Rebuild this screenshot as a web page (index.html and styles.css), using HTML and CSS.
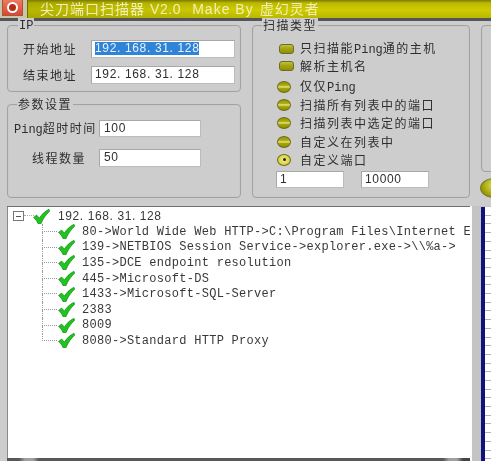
FILE: index.html
```html
<!DOCTYPE html>
<html lang="zh">
<head>
<meta charset="utf-8">
<title>尖刀端口扫描器</title>
<link rel="stylesheet" href="styles.css">
</head>
<body>
<svg class="defs" width="0" height="0">
  <symbol id="ok" viewBox="0 0 17 15">
    <path d="M0.5 8.5 L3.5 6 L6.5 9 C8.5 5.5 11.5 2.5 16 0.3 L16.7 2.2 C12.8 5.8 10 9.8 8 14.7 L5 14.7 C4 12 2.5 10 0.5 8.5 Z" fill="#1fc41f" stroke="#0d7d0d" stroke-width="0.6"/>
  </symbol>
</svg>
<div class="app">
  <header class="titlebar">
    <div class="appicon"><span class="ring"></span></div>
    <div class="caption"><span class="cap-cn">尖刀端口扫描器</span><span class="cap-ver">V2.0</span><span class="cap-make">Make By</span><span class="cap-cn">虚幻灵者</span></div>
  </header>

  <div class="top">
    <div class="leftcol">
      <section class="group group-ip">
        <h2 class="legend legend-ip"><span class="lat">IP</span></h2>
        <div class="form form-ip">
          <label class="cn lab-ip">开始地址</label>
          <div class="field field-ip"><span class="sel">192. 168. 31. 128</span></div>
          <label class="cn lab-ip">结束地址</label>
          <div class="field field-ip">192. 168. 31. 128</div>
        </div>
      </section>
      <section class="group group-par">
        <h2 class="legend cn">参数设置</h2>
        <div class="form form-par">
          <label class="cn"><span class="lat">Ping</span>超时时间</label>
          <div class="field field-ping">100</div>
          <label class="cn lab-thread">线程数量</label>
          <div class="field field-thread">50</div>
        </div>
      </section>
    </div>

    <section class="group group-scan">
      <h2 class="legend cn">扫描类型</h2>
      <div class="opts">
        <div class="opt opt-check"><i class="cap"></i><span class="cn">只扫描能<span class="lat">Ping</span>通的主机</span></div>
        <div class="opt opt-check"><i class="cap"></i><span class="cn">解析主机名</span></div>
        <div class="opt opt-radio opt-first"><i class="rad"></i><span class="cn">仅仅<span class="lat">Ping</span></span></div>
        <div class="opt opt-radio"><i class="rad"></i><span class="cn">扫描所有列表中的端口</span></div>
        <div class="opt opt-radio"><i class="rad"></i><span class="cn">扫描列表中选定的端口</span></div>
        <div class="opt opt-radio"><i class="rad"></i><span class="cn">自定义在列表中</span></div>
        <div class="opt opt-radio"><i class="rad rad-on"></i><span class="cn">自定义端口</span></div>
      </div>
      <div class="range">
        <div class="field field-range">1</div>
        <div class="field field-range">10000</div>
      </div>
    </section>

    <div class="rightcol">
      <section class="group group-right"></section>
      <div class="ball"></div>
    </div>
  </div>

  <div class="bottom">
    <div class="treebox">
      <div class="treelist">
        <div class="root">
          <span class="minus"></span>
          <svg class="ok"><use href="#ok"/></svg>
          <span class="ip">192. 168. 31. 128</span>
        </div>
        <ul class="tree">
          <li><svg class="ok"><use href="#ok"/></svg><span>80-&gt;World Wide Web HTTP-&gt;C:\Program Files\Internet E</span></li>
          <li><svg class="ok"><use href="#ok"/></svg><span>139-&gt;NETBIOS Session Service-&gt;explorer.exe-&gt;\\%a-&gt;</span></li>
          <li><svg class="ok"><use href="#ok"/></svg><span>135-&gt;DCE endpoint resolution</span></li>
          <li><svg class="ok"><use href="#ok"/></svg><span>445-&gt;Microsoft-DS</span></li>
          <li><svg class="ok"><use href="#ok"/></svg><span>1433-&gt;Microsoft-SQL-Server</span></li>
          <li><svg class="ok"><use href="#ok"/></svg><span>2383</span></li>
          <li><svg class="ok"><use href="#ok"/></svg><span>8009</span></li>
          <li><svg class="ok"><use href="#ok"/></svg><span>8080-&gt;Standard HTTP Proxy</span></li>
        </ul>
      </div>
      <div class="treefoot"></div>
    </div>
    <div class="ruler"></div>
  </div>
</div>
</body>
</html>
```

FILE: styles.css
```css
html, body { margin: 0; padding: 0; background: #cdcdcd; overflow: hidden; }
.defs { display: block; width: 0; height: 0; }

.app {
  width: 491px; height: 461px; overflow: hidden;
  background: #cdcdcd; color: #2e2e2e;
  display: flex; flex-direction: column;
  font-family: "Liberation Mono", "Noto Sans CJK SC", monospace;
  font-size: 12px;
  filter: blur(0.6px);
}

/* title */
.titlebar {
  height: 21px; flex: none; box-sizing: border-box;
  display: flex;
  border-bottom: 3px solid #55555c;
  background: #c9c7a8;
}
.appicon {
  width: 21px; margin-left: 2px; height: 16px; box-sizing: border-box;
  background: linear-gradient(#ee7a60, #d9482f);
  border: 1px solid #a8553f; border-top: 0;
  display: flex; align-items: center; justify-content: center;
}
.ring { width: 7px; height: 7px; border: 2px solid #fff; border-radius: 50%; background: #b52c1a; }
.caption {
  flex: 1; margin-left: 4px; height: 18px; padding-left: 12px; box-sizing: border-box;
  display: flex; align-items: center;
  background: linear-gradient(90deg, rgba(120,120,0,.25) 0, rgba(120,120,0,0) 45%), linear-gradient(#7e7a00 0, #b9b900 3px, #cfcb00 10px, #b8b800 100%);
  border-left: 1px solid #6c6c00;
  color: #f3efb4;
  font-family: "Liberation Sans", "Noto Sans CJK SC", sans-serif;
  font-size: 14px; line-height: 16px; letter-spacing: 1px;
}
.cap-ver { margin-left: 5px; letter-spacing: .6px; }
.cap-make { margin-left: 11px; margin-right: 6px; letter-spacing: 1px; }

/* layout */
.top { display: flex; gap: 11px; padding: 4px 0 0 7px; height: 173px; flex: none; }
.leftcol { width: 234px; flex: none; display: flex; flex-direction: column; gap: 12px; }
.rightcol { flex: none; width: 40px; display: flex; flex-direction: column; }

.group {
  box-sizing: border-box; border: 1px solid #a2a2a2; border-radius: 4px;
  box-shadow: inset 0 0 1px #bbb;
}
.group-ip { height: 67px; }
.group-par { height: 94px; }
.group-scan { width: 218px; height: 173px; flex: none; }
.group-right { height: 147px; width: 60px; }

.legend {
  display: block; width: fit-content; height: 14px; line-height: 14px;
  margin: -8px 0 0 9px; padding: 0 1px;
  background: #cdcdcd; font-weight: 400; font-size: 12px; color: #2e2e2e;
}
.legend-ip { margin-left: 10px; padding-top: 1px; height: 13px; }
.cn { font-family: "Noto Sans CJK SC", sans-serif; font-size: 12px; letter-spacing: 1.5px; line-height: 14px; color: #2e2e2e; }
.lat { font-family: "Liberation Mono", monospace; letter-spacing: 0; }

/* forms */
.form { display: grid; align-items: center; }
.form-ip { grid-template-columns: 68px 144px; padding: 8px 0 0 15px; row-gap: 8px; }
.form-par { grid-template-columns: 85px 102px; padding: 9px 0 0 6px; row-gap: 12px; }
.lab-thread { padding-left: 18px; }

.field {
  box-sizing: border-box; height: 18px; background: #fff;
  border: 1px solid #a8a8a8; border-bottom-color: #bcbcbc; border-right-color: #bcbcbc;
  padding: 0 0 0 3px; line-height: 15px;
  font-family: "Liberation Sans", sans-serif; font-size: 12px; letter-spacing: .65px; color: #2e2e2e;
  white-space: nowrap;
}
.sel { background: #2f84d8; color: #e8f1fb; display: inline-block; height: 13px; line-height: 13px; }
.field-ping, .field-thread { padding-left: 4px; }
.field-ping { height: 17px; }
.field-range { width: 68px; height: 17px; }

/* scan options */
.opts { padding: 8px 0 0 0; }
.opt { display: flex; align-items: center; }
.opt-check { height: 17px; padding-left: 26px; gap: 6px; }
.opt-radio { height: 18.3px; padding-left: 24px; gap: 9px; }
.opt-first { margin-top: 5px; height: 16.8px; }
.cap {
  width: 15px; height: 10px; box-sizing: border-box; border-radius: 3px;
  border: 1px solid #6c6c28;
  background: linear-gradient(#c2c23a 0, #a6a612 45%, #8f8f05 100%);
}
.rad {
  width: 14px; height: 12px; box-sizing: border-box; border-radius: 50%;
  border: 1px solid #6d6d1c;
  background: linear-gradient(#8e8e0a 0, #b0b010 35%, #e9e98a 50%, #a8a80c 62%, #8c8c04 100%);
  display: flex; align-items: center; justify-content: center;
}
.rad-on { background: radial-gradient(circle, #f3ef8a 0, #d7d03c 70%, #9a9408 100%); }
.rad-on::after { content: ""; width: 3px; height: 3px; border-radius: 50%; background: #222; }
.range { display: flex; gap: 17px; padding: 2px 0 0 23px; }

.ball {
  width: 28px; height: 20px; margin-top: 6px; margin-left: -1px; border-radius: 50%;
  background: radial-gradient(ellipse at 50% 35%, #e3e36a 0, #a9a90c 55%, #6f6f12 100%);
  border: 1px solid #77772a; box-sizing: border-box;
}

/* bottom */
.bottom { display: flex; margin-top: 8px; flex: 1; min-height: 0; padding-left: 7px; }
.treebox {
  width: 463px; flex: none; box-sizing: border-box; background: #fff;
  border-top: 1px solid #6f6f6f;
  display: flex; flex-direction: column;
  font-family: "Liberation Mono", monospace; font-size: 12px; letter-spacing: .28px; color: #383838;
  white-space: nowrap;
}
.treelist { flex: 1; min-height: 0; overflow: hidden; padding: 1px 0 0 5px; border-left: 1px solid #8a8a8a; }
.treefoot {
  height: 3px; flex: none;
  background: linear-gradient(90deg, #585858 0, #585858 12px, #a0a0a0 18px, #a0a0a0 26px, #585858 32px, #585858 436px, #a0a0a0 442px, #a0a0a0 450px, #444 456px);
}
.root { display: flex; align-items: center; height: 16px; }
.minus {
  width: 11px; height: 10px; box-sizing: border-box; border: 1px solid #777; position: relative; flex: none;
  background: linear-gradient(#555, #555) center / 5px 1px no-repeat #fff;
}
.minus::after { content: ""; position: absolute; left: 10px; top: 3px; width: 10px; border-top: 1px dotted #aaa; }
.ok { width: 17px; height: 15px; flex: none; display: block; }
.root .ok { margin-left: 9px; }
.ip { margin-left: 8px; font-family: "Liberation Sans", sans-serif; letter-spacing: .6px; }

.tree { list-style: none; margin: 0; padding: 0 0 0 45px; }
.tree li { display: flex; align-items: center; height: 15.6px; position: relative; }
.tree li::before {
  content: ""; position: absolute; left: -16px; top: 0; width: 15px; height: 8px;
  border-left: 1px dotted #999; border-bottom: 1px dotted #999; box-sizing: border-box;
}
.tree li::after {
  content: ""; position: absolute; left: -16px; top: 8px; height: 8px; border-left: 1px dotted #999;
}
.tree li:last-child::after { display: none; }
.tree span { margin-left: 7px; }

.ruler {
  flex: 1; box-sizing: border-box;
  background: linear-gradient(#fdfdfd, #fdfdfd) 0 0 / 2px 100% no-repeat #c4c4c4;
  position: relative;
}
.ruler::after {
  content: ""; position: absolute; left: 11px; right: 0; top: 1px; bottom: 0;
  border-left: 4px solid #12127e;
  background: repeating-linear-gradient(#fff 0, #fff 7.7px, #b4b4b4 7.7px, #b4b4b4 8.7px);
}
```
